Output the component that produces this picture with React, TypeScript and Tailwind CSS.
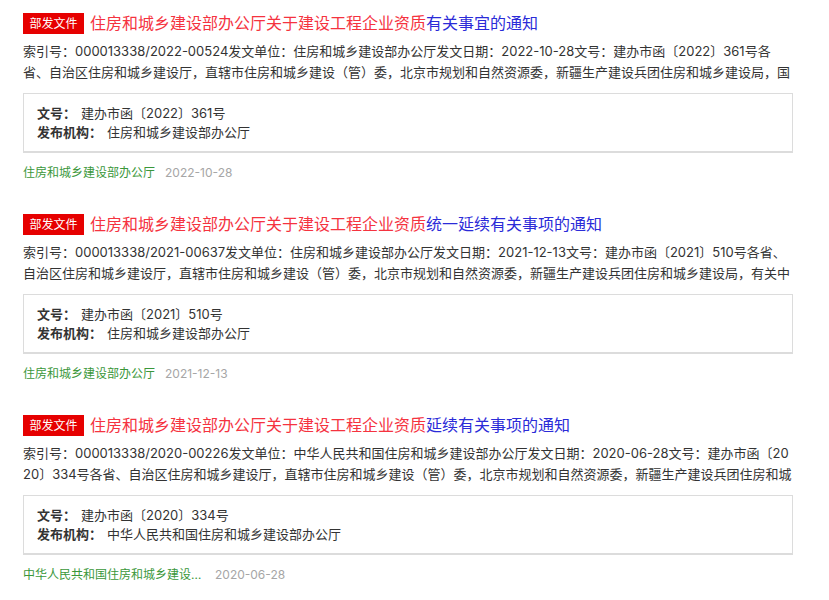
import React from 'react';

type Doc = {
  red: string;
  blue: string;
  summary: string;
  wenhao: string;
  org: string;
  date: string;
};

const docs: Doc[] = [
  {
    red: '住房和城乡建设部办公厅关于建设工程企业资质',
    blue: '有关事宜的通知',
    summary:
      '索引号：000013338/2022-00524发文单位：住房和城乡建设部办公厅发文日期：2022-10-28文号：建办市函〔2022〕361号各省、自治区住房和城乡建设厅，直辖市住房和城乡建设（管）委，北京市规划和自然资源委，新疆生产建设兵团住房和城乡建设局，国务院有关部门建设司（局），中央军委后勤保障部军事设施建设局，有关中央企业：',
    wenhao: '建办市函〔2022〕361号',
    org: '住房和城乡建设部办公厅',
    date: '2022-10-28',
  },
  {
    red: '住房和城乡建设部办公厅关于建设工程企业资质',
    blue: '统一延续有关事项的通知',
    summary:
      '索引号：000013338/2021-00637发文单位：住房和城乡建设部办公厅发文日期：2021-12-13文号：建办市函〔2021〕510号各省、自治区住房和城乡建设厅，直辖市住房和城乡建设（管）委，北京市规划和自然资源委，新疆生产建设兵团住房和城乡建设局，有关中央企业：',
    wenhao: '建办市函〔2021〕510号',
    org: '住房和城乡建设部办公厅',
    date: '2021-12-13',
  },
  {
    red: '住房和城乡建设部办公厅关于建设工程企业资质',
    blue: '延续有关事项的通知',
    summary:
      '索引号：000013338/2020-00226发文单位：中华人民共和国住房和城乡建设部办公厅发文日期：2020-06-28文号：建办市函〔2020〕334号各省、自治区住房和城乡建设厅，直辖市住房和城乡建设（管）委，北京市规划和自然资源委，新疆生产建设兵团住房和城乡建设局，有关中央企业：',
    wenhao: '建办市函〔2020〕334号',
    org: '中华人民共和国住房和城乡建设部办公厅',
    date: '2020-06-28',
  },
];

const DocItem: React.FC<{ doc: Doc }> = ({ doc }) => {
  return (
    <div className="pt-[13px] pb-[20px]">
      <div className="flex items-center h-[21px]">
        <span className="w-[61px] h-[21px] bg-[#e60000] text-white text-[12px] leading-[21px] text-center shrink-0">
          部发文件
        </span>
        <span className="ml-[6px] text-[16px] leading-[21px] whitespace-nowrap">
          <span className="text-[#f5333f]">{doc.red}</span>
          <span className="text-[#2b2bd8]">{doc.blue}</span>
        </span>
      </div>
      <p className="mt-[7px] text-[13px] leading-[21px] text-[#333] h-[42px] overflow-hidden break-all">
        {doc.summary}
      </p>
      <div className="mt-[10px] border border-b-2 border-[#dcdcdc] pl-[13px] pt-[10px] pb-[9px] text-[13px] leading-[19px] text-[#333]">
        <div className="flex">
          <span className="font-bold mr-[5px]">文号：</span>
          <span>{doc.wenhao}</span>
        </div>
        <div className="flex">
          <span className="font-bold mr-[5px]">发布机构：</span>
          <span>{doc.org}</span>
        </div>
      </div>
      <div className="mt-[12px] flex items-center text-[12px] leading-[16px]">
        <span className="text-[#3a973a] max-w-[182px] truncate">{doc.org}</span>
        <span className="ml-[10px] text-[#a6a6a6] shrink-0">{doc.date}</span>
      </div>
    </div>
  );
};

export default function App() {
  return (
    <div
      className="bg-white w-[829px] min-h-[600px] px-[23px] overflow-hidden"
      style={{ fontFamily: '"Inter", "Noto Sans CJK SC", sans-serif' }}
    >
      <div className="w-[770px]">
        {docs.map((d, i) => (
          <DocItem key={i} doc={d} />
        ))}
      </div>
    </div>
  );
}
